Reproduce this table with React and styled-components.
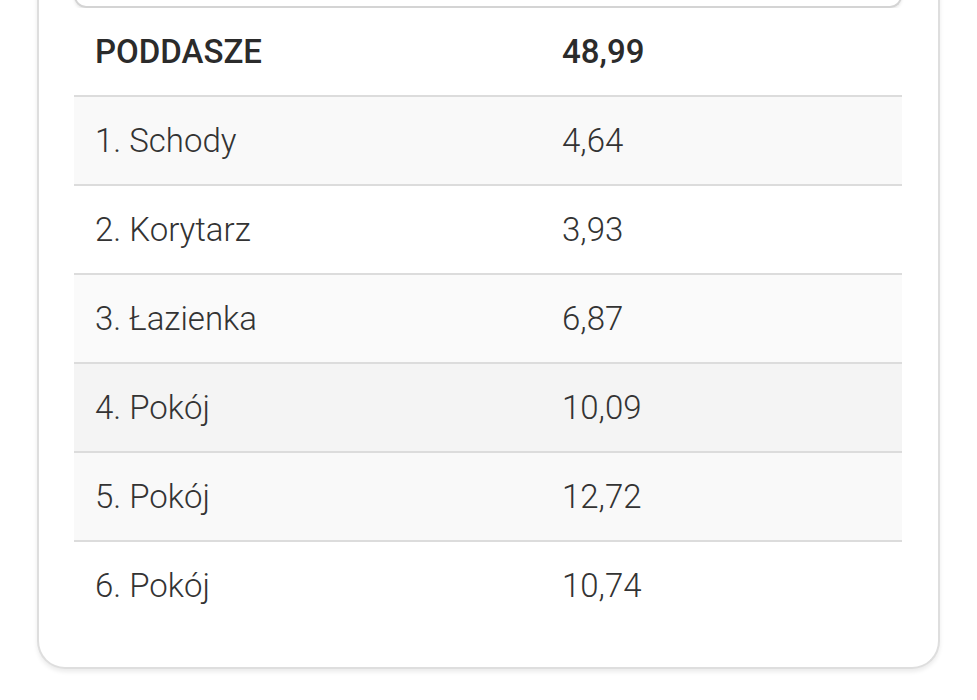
import React from 'react'
import styled, { createGlobalStyle } from 'styled-components'

const GlobalStyle = createGlobalStyle`
  body {
    margin: 0;
    background: #ffffff;
    font-family: Roboto, "Liberation Sans", sans-serif;
    color: #333333;
  }
`

const Page = styled.div`
  padding: 0 37px 40px 37px;
  overflow: hidden;
  height: 700px;
  box-sizing: border-box;
`

const Card = styled.div`
  margin-top: -40px;
  padding: 0 36px 36px 35px;
  border: 2px solid #dedede;
  border-top: none;
  border-radius: 0 0 28px 28px;
  box-shadow: 0 3px 4px rgba(0, 0, 0, 0.08);
  background: #fff;
`

const SearchBox = styled.div`
  height: 46px;
  border: 2px solid #d4d4d4;
  border-top: none;
  border-radius: 0 0 12px 12px;
  box-shadow: 0 2px 3px rgba(0, 0, 0, 0.08);
`

const Table = styled.table`
  width: 100%;
  border-collapse: collapse;
  font-size: 33px;
`

const Row = styled.tr`
  background: ${p => p.$bg || '#fff'};
  border-bottom: 2px solid ${p => (p.$last ? 'transparent' : '#dcdcdc')};
`

const Cell = styled.td`
  height: 87px;
  padding: 0 21px;
  font-weight: ${p => (p.$head ? 500 : 300)};
  color: ${p => (p.$head ? '#2b2b2b' : '#333')};
  width: ${p => p.$w || 'auto'};
`

const rooms = [
  ['1. Schody', '4,64', '#f9f9f9'],
  ['2. Korytarz', '3,93', '#fff'],
  ['3. Łazienka', '6,87', '#fafafa'],
  ['4. Pokój', '10,09', '#f4f4f4'],
  ['5. Pokój', '12,72', '#f9f9f9'],
  ['6. Pokój', '10,74', '#fff']
]

export default function App() {
  return (
    <Page>
      <GlobalStyle />
      <Card>
        <SearchBox />
        <Table>
          <tbody>
            <Row>
              <Cell $head $w="425px">PODDASZE</Cell>
              <Cell $head>48,99</Cell>
            </Row>
            {rooms.map(([name, area, bg], i) => (
              <Row key={name} $bg={bg} $last={i === rooms.length - 1}>
                <Cell>{name}</Cell>
                <Cell>{area}</Cell>
              </Row>
            ))}
          </tbody>
        </Table>
      </Card>
    </Page>
  )
}
